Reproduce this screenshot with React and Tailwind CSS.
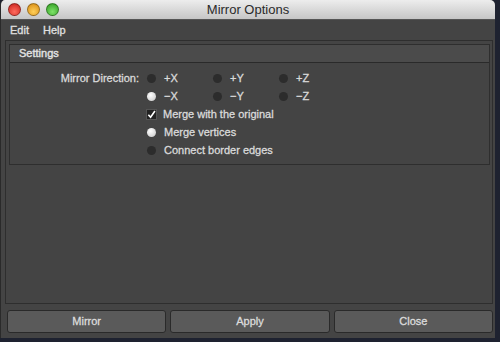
import React from "react";

function Radio({ on }) {
  return (
    <span
      className={`inline-block w-[9px] h-[9px] rounded-full shrink-0 ${
        on ? "bg-[radial-gradient(circle_at_40%_35%,#ffffff,#c4c4c4)]" : "bg-[#2c2c2c]"
      }`}
    />
  );
}

function Light({ from, to }) {
  return (
    <span
      className="inline-block w-[13px] h-[13px] rounded-full border border-[#00000055]"
      style={{ background: `radial-gradient(circle at 50% 70%, ${from}, ${to})` }}
    />
  );
}

export default function App() {
  const font = { fontFamily: '"Liberation Sans", Arial, sans-serif' };
  const dirs = [
    [["+X", false], ["+Y", false], ["+Z", false]],
    [["−X", true], ["−Y", false], ["−Z", false]],
  ];

  return (
    <div className="w-[500px] h-[342px] bg-[#1e2230] overflow-hidden" style={font}>
      <div className="w-[495px] h-[338px] bg-[#444444] rounded-t-[5px] flex flex-col overflow-hidden border-l border-[#2a2a2a]">
        {/* Title bar */}
        <div className="h-[20px] relative flex items-center bg-gradient-to-b from-[#ededed] to-[#c6c6c6] border-b border-[#555]">
          <div className="flex gap-[6px] pl-[7px] items-center">
            <Light from="#ff6b5e" to="#c8201a" />
            <Light from="#ffd05a" to="#d6880e" />
            <Light from="#7fe36a" to="#2e9b1f" />
          </div>
          <div className="absolute inset-0 flex items-center justify-center text-[13px] text-[#2a2a2a]">
            Mirror Options
          </div>
        </div>

        {/* Menu */}
        <div className="h-[20px] flex items-center gap-[14px] pl-[9px] text-[11px] text-[#e0e0e0] [-webkit-text-stroke:0.3px_#e0e0e0]">
          <span>Edit</span>
          <span>Help</span>
        </div>

        {/* Content */}
        <div className="pl-[4px] pr-[2px]">
          <div className="h-[264px] border border-[#2e2e2e] pt-[3px] pl-[3px] pr-[2px]">
            <div className="border border-[#2e2e2e]">
              <div className="h-[18px] bg-[#4b4b4b] border-b border-[#2a2a2a] flex items-center pl-[9px] text-[11px] text-[#e2e2e2] [-webkit-text-stroke:0.4px_#e2e2e2]">
                Settings
              </div>
              <div className="pt-[6px] pb-[5px] text-[11px] text-[#dadada] [-webkit-text-stroke:0.3px_#dadada]">
                {dirs.map((row, i) => (
                  <div key={i} className="h-[18px] flex items-center">
                    <div className="w-[137px] shrink-0 text-right pr-[8px]">{i === 0 ? "Mirror Direction:" : ""}</div>
                    {row.map(([label, on]) => (
                      <div key={label} className="w-[66px] flex items-center gap-[8px]">
                        <Radio on={on} />
                        <span>{label}</span>
                      </div>
                    ))}
                  </div>
                ))}
                <div className="h-[18px] flex items-center pl-[136px] gap-[6px]">
                  <span className="w-[11px] h-[11px] bg-[#222] border border-[#555] flex items-center justify-center">
                    <svg width="9" height="9" viewBox="0 0 10 10">
                      <path d="M1.5 5.2 L4 8 L8.8 1.2" fill="none" stroke="#fff" strokeWidth="1.8" />
                    </svg>
                  </span>
                  <span>Merge with the original</span>
                </div>
                <div className="h-[18px] flex items-center pl-[137px] gap-[8px]">
                  <Radio on />
                  <span>Merge vertices</span>
                </div>
                <div className="h-[18px] flex items-center pl-[137px] gap-[8px]">
                  <Radio on={false} />
                  <span>Connect border edges</span>
                </div>
              </div>
            </div>
          </div>
        </div>

        {/* Buttons */}
        <div className="flex gap-[4px] pl-[6px] pr-[2px] pt-[6px]">
          {["Mirror", "Apply", "Close"].map((b) => (
            <button
              key={b}
              className="flex-1 h-[23px] rounded-[3px] bg-[#5a5a5a] border border-[#2a2a2a] text-[11px] text-[#dcdcdc] [-webkit-text-stroke:0.3px_#dcdcdc]"
            >
              {b}
            </button>
          ))}
        </div>
      </div>
    </div>
  );
}
